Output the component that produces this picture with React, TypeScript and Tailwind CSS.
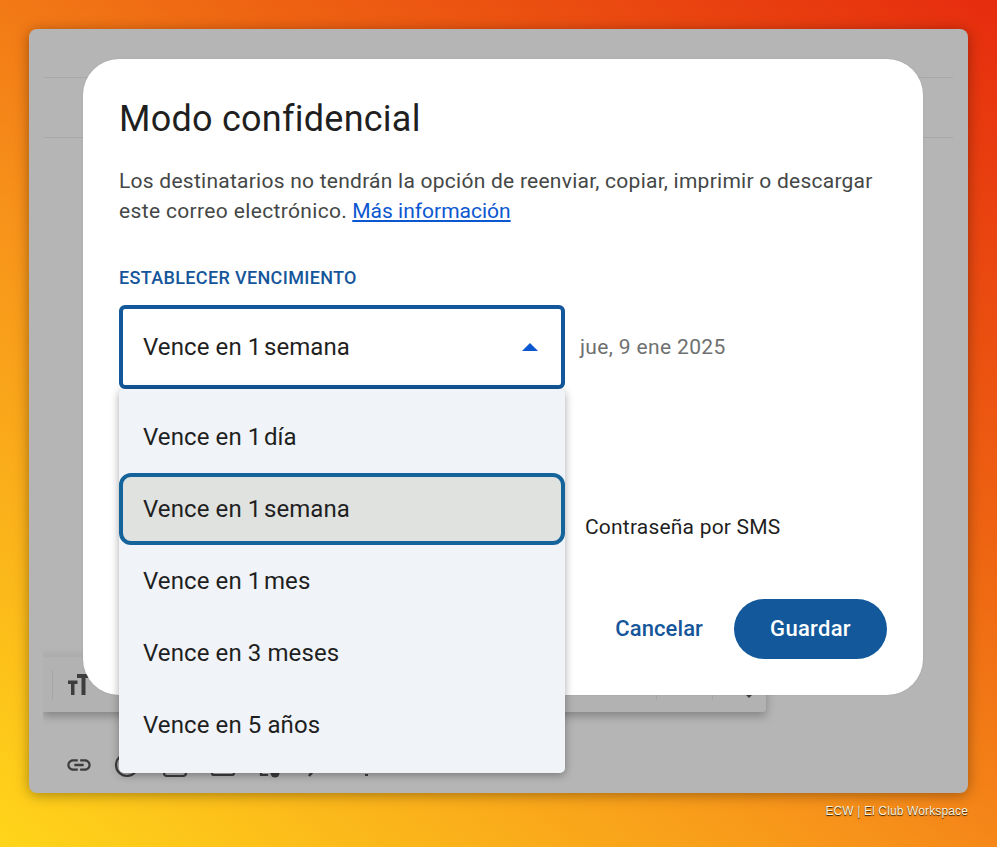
const fontSans = 'font-["Roboto","Noto_Sans",sans-serif]';

const options = ['Vence en 1 día', 'Vence en 1 semana', 'Vence en 1 mes', 'Vence en 3 meses', 'Vence en 5 años'];

// the "1" is narrower in the reference font
const Label = ({ text }: { text: string }) => {
  const parts = text.split(' 1 ');
  if (parts.length < 2) return <span>{text}</span>;
  return (
    <span>
      {parts[0]} <span className="tracking-[-3.5px]">1</span> {parts[1]}
    </span>
  );
};

const Option = ({ label, selected }: { label: string; selected: boolean }) => (
  <li
    className={
      selected
        ? 'flex h-[72px] items-center rounded-[12px] border-4 border-[#15639b] bg-[#e0e2e0] pl-5 text-[24px] tracking-[0.1px] text-[#1f1f1f]'
        : 'flex h-[72px] items-center pl-6 text-[24px] tracking-[0.1px] text-[#1f1f1f]'
    }
  >
    <Label text={label} />
  </li>
);

const BottomIcons = () => (
  <div className="flex h-[81px] items-center gap-5 pl-[36px] pt-6 text-[#3d3d3d]">
    <svg width="28" height="28" viewBox="0 0 24 24">
      <path fill="currentColor" d="M3.9 12c0-1.71 1.39-3.1 3.1-3.1h4V7H7c-2.76 0-5 2.24-5 5s2.24 5 5 5h4v-1.9H7c-1.71 0-3.1-1.39-3.1-3.1zM8 13h8v-2H8v2zm9-6h-4v1.9h4c1.71 0 3.1 1.39 3.1 3.1s-1.39 3.1-3.1 3.1h-4V17h4c2.76 0 5-2.24 5-5s-2.24-5-5-5z" />
    </svg>
    <svg width="28" height="28" viewBox="0 0 28 28">
      <circle cx="14" cy="14" r="11" fill="none" stroke="currentColor" strokeWidth="2.2" />
    </svg>
    <svg width="28" height="28" viewBox="0 0 28 28">
      <rect x="3" y="3" width="22" height="22" rx="3" fill="none" stroke="currentColor" strokeWidth="2.2" />
    </svg>
    <svg width="28" height="28" viewBox="0 0 28 28">
      <rect x="3" y="4" width="22" height="20" rx="2" fill="none" stroke="currentColor" strokeWidth="2.2" />
    </svg>
    <svg width="28" height="28" viewBox="0 0 28 28">
      <path d="M4 19v5h7" fill="none" stroke="currentColor" strokeWidth="2.2" />
      <circle cx="18" cy="22" r="4.5" fill="currentColor" />
    </svg>
    <svg width="28" height="28" viewBox="0 0 28 28">
      <path d="M9 19l-5 6" fill="none" stroke="currentColor" strokeWidth="2.6" />
    </svg>
    <svg width="28" height="28" viewBox="0 0 28 28">
      <rect x="12" y="23" width="3" height="2" fill="currentColor" />
    </svg>
  </div>
);

const ComposeBehind = () => (
  <div className="flex h-full flex-col">
    <div className="mx-[15px] mt-[48px] border-t border-[#a8a8a8]" />
    <div className="mx-[15px] mt-[59px] border-t border-[#a8a8a8]" />
    <div className="mt-auto">
      <div className="ml-[14px] h-[9px] w-[723px] bg-gradient-to-b from-[#b5b5b5] to-[#acacac]" />
      <div className="ml-[14px] flex h-[55px] w-[723px] items-center rounded-br-[3px] bg-[#b2b2b2] shadow-[0_4px_10px_rgba(0,0,0,0.28)] [clip-path:inset(0_-20px_-20px_0)]">
        <div className="ml-[9px] h-[30px] border-l border-[#a6a6a6]" />
        <svg width="22" height="21" viewBox="0 0 22 21" className="ml-[15px] text-[#3d3d3d]">
          <path fill="currentColor" d="M9 0h13v4h-4.500v17h-4V4H9zM0 6.500h9.500v3.500H6.500v11H3V10H0z" />
        </svg>
        <div className="ml-[566px] h-[30px] border-l border-[#a6a6a6]" />
        <div className="ml-[55px] h-[30px] border-l border-[#a6a6a6]" />
        <svg width="10" height="28" viewBox="0 0 10 28" className="ml-[31px] text-[#3d3d3d]">
          <path fill="currentColor" d="M2 24l3 3 3-3z" />
        </svg>
      </div>
      <BottomIcons />
    </div>
  </div>
);

const Dialog = () => (
  <div className="absolute left-[54px] top-[30px] flex h-[636px] w-[840px] flex-col rounded-[36px] bg-white px-9 pt-[36px] shadow-[0_0_2px_rgba(0,0,0,0.1)]">
    <h1 className="text-[36px] leading-[48px] tracking-[0.25px] text-[#1f1f1f]">Modo confidencial</h1>
    <div className="mt-[23px] text-[21px] leading-[30px] text-[#444746]">
      <p className="tracking-[0.25px]">Los destinatarios no tendrán la opción de reenviar, copiar, imprimir o descargar</p>
      <p className="flex">
        <span className="tracking-[0.35px]">este correo electrónico.</span>
        <a className="ml-[5px] text-[#0b57d0] underline">Más información</a>
      </p>
    </div>
    <h2 className="mt-[40px] text-[18px] font-medium leading-[24px] tracking-[0.35px] text-[#15569a]">ESTABLECER VENCIMIENTO</h2>
    <div className="relative mt-[15px] flex items-center">
      <div className="flex h-[84px] w-[446px] items-center justify-between rounded-[6px] border-4 border-[#12589a] pl-5 pr-[23px] text-[24px] tracking-[0.1px] text-[#1f1f1f]">
        <Label text="Vence en 1 semana" />
        <span className="h-0 w-0 border-x-[8px] border-b-[8px] border-x-transparent border-b-[#0b57d0]" />
      </div>
      <span className="ml-[15px] mt-[2px] text-[21px] tracking-[0.35px] text-[#6e716f]">jue, 9 ene 2025</span>
      <ul className="absolute left-0 top-[84px] z-10 h-[384px] w-[446px] rounded-[5px] bg-[#f0f3f8] py-[12px] shadow-[0_2px_8px_rgba(0,0,0,0.35)]">
        {options.map((label) => (
          <Option key={label} label={label} selected={label === 'Vence en 1 semana'} />
        ))}
      </ul>
    </div>
    <div className="ml-[466px] mt-[123px] text-[21px] leading-[30px] tracking-[0.2px] text-[#1f1f1f]">Contraseña por SMS</div>
    <div className="mt-[57px] flex items-center justify-end">
      <span className="mb-[2px] mr-[31px] text-[22px] font-medium tracking-[0.1px] text-[#15569a]">Cancelar</span>
      <button className="h-[60px] w-[153px] rounded-full bg-[#12589a] pb-[2px] text-[22px] font-medium tracking-[0.3px] text-white">Guardar</button>
    </div>
  </div>
);

const App = () => {
  return (
    <div className={`${fontSans} h-[847px] w-[997px] overflow-hidden bg-[linear-gradient(36deg,#ffd51a_0%,#f7931a_40%,#ee6412_65%,#e62c0e_100%)] pl-[29px] pt-[29px]`}>
      <div className="relative h-[764px] w-[939px] rounded-[8px] bg-[#b5b5b5] shadow-[0_2px_14px_rgba(0,0,0,0.35)]">
        <ComposeBehind />
        <Dialog />
      </div>
      <div className="mt-[11px] w-[939px] text-right font-['Liberation_Sans',sans-serif] text-[12px] leading-[14px] tracking-[0.13px] text-[#fff3dd] [text-shadow:0_1px_1px_rgba(0,0,0,0.8)]">
        ECW | El Club Workspace
      </div>
    </div>
  );
};

export default App;
